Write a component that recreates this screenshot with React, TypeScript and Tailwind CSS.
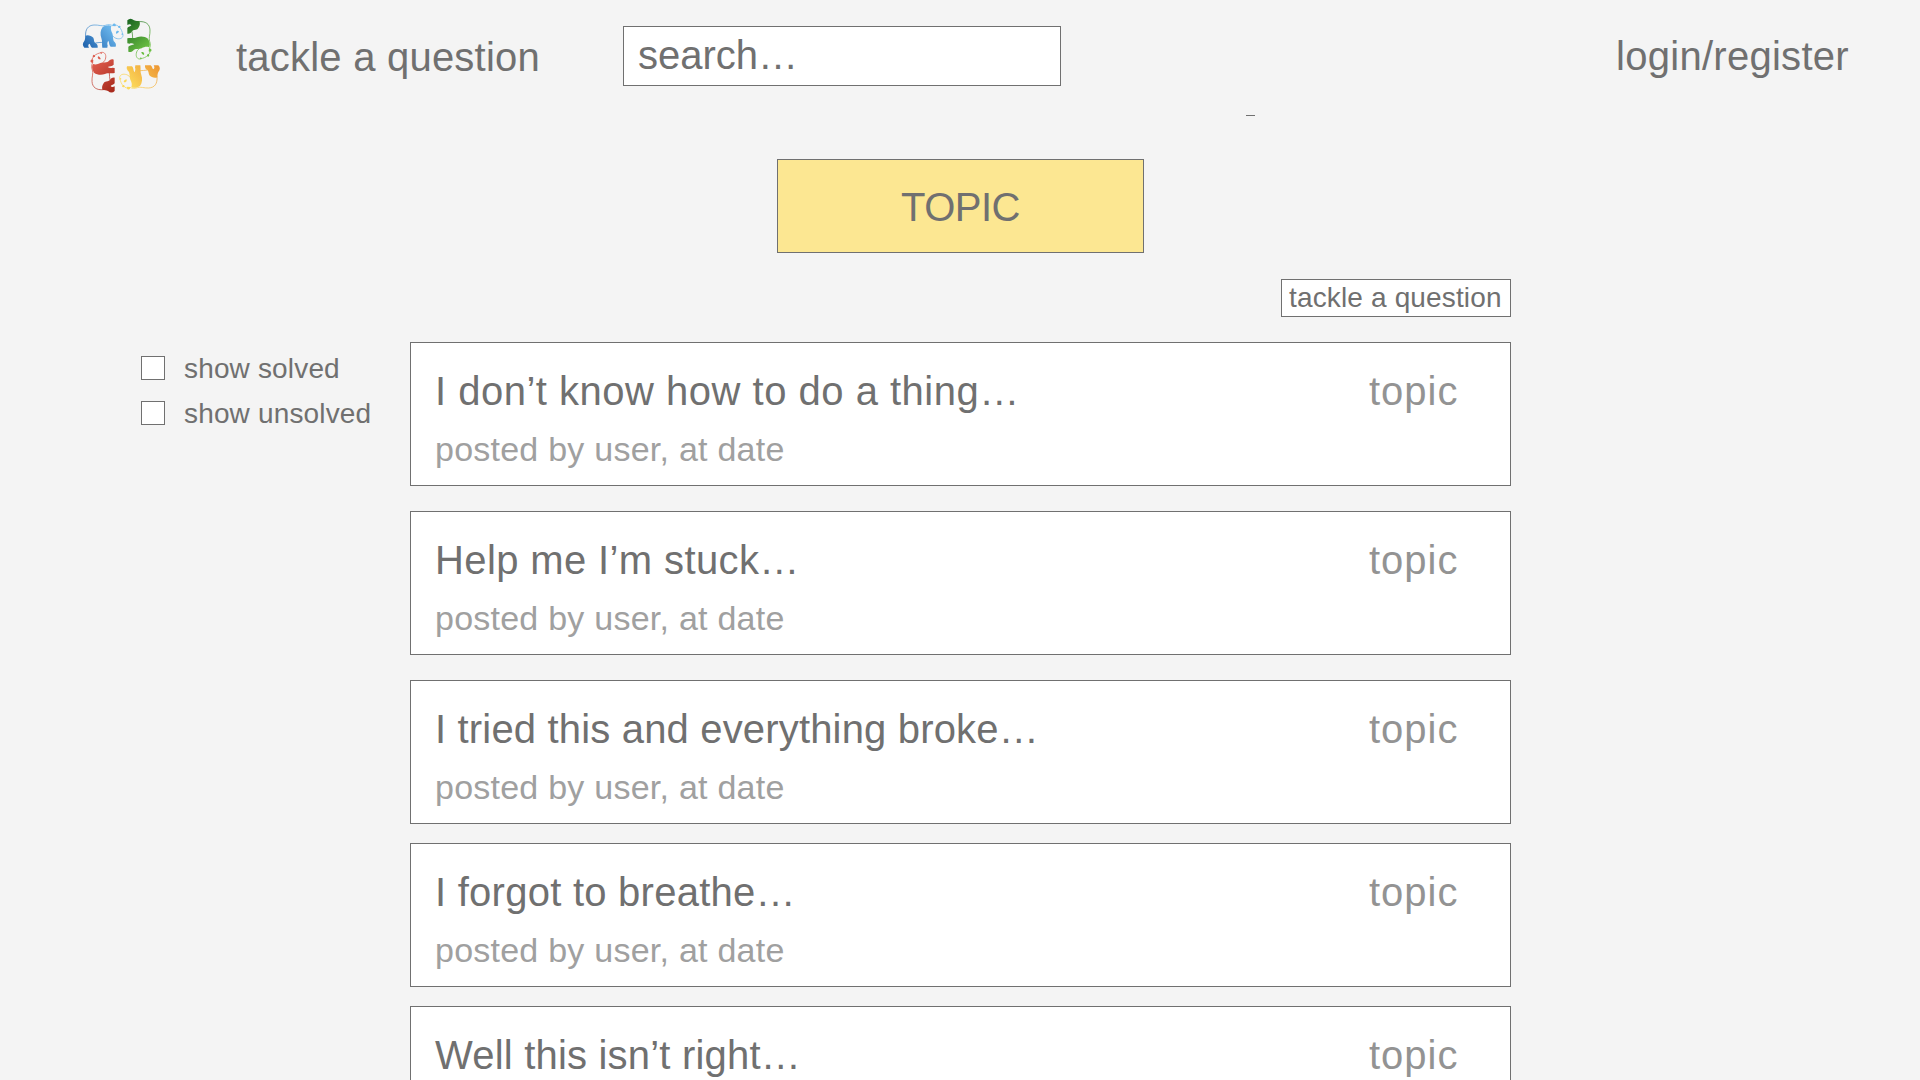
import React from "react";

const questions = [
  { title: "I don’t know how to do a thing…", card: "mt-0", text: "tracking-[0.5px]" },
  { title: "Help me I’m stuck…", card: "mt-[25px]", text: "tracking-[0.38px]" },
  { title: "I tried this and everything broke…", card: "mt-[25px]", text: "tracking-[0.17px]" },
  { title: "I forgot to breathe…", card: "mt-[19px]", text: "tracking-[0.25px]" },
  { title: "Well this isn’t right…", card: "mt-[19px]", text: "tracking-[0.2px]" },
];

const pandas = [
  { id: "blue", from: "#6db9ee", to: "#2467b0", transform: "matrix(1 0 0 1 0 0)" },
  { id: "green", from: "#6cc043", to: "#1f6b23", transform: "matrix(0 1 -1 0 285 -12)" },
  { id: "red", from: "#dd5a4c", to: "#a82a1c", transform: "matrix(0 -1 1 0 21 286)" },
  { id: "yellow", from: "#fbd95a", to: "#ee9a35", transform: "matrix(-1 0 0 -1 308 279)" },
];

function Logo() {
  return (
    <svg className="mt-[10px] ml-[70px] h-[90px] w-[100px] shrink-0" viewBox="0 0 300 270">
      {pandas.map((p) => (
        <g key={p.id} transform={p.transform}>
          <defs>
            <linearGradient id={p.id} gradientUnits="userSpaceOnUse" x1="125" y1="50" x2="50" y2="112">
              <stop offset="0" stopColor={p.from} />
              <stop offset="1" stopColor={p.to} />
            </linearGradient>
          </defs>
          <path
            d="M47 80C45 58 54 46 72 45C86 44 96 50 106 46C114 43 121 43 128 47C136 44 143 45 147 51C155 57 156 66 159 74C160 83 152 88 142 86C136 85 131 82 128 77M76 99C84 97 90 98 98 97"
            fill="none"
            stroke={`url(#${p.id})`}
            strokeWidth="2.2"
          />
          <path
            d="M46 77C54 73 64 77 70 83C73 90 71 94 76 99C81 101 84 106 83 113L66 113C61 109 62 104 58 101C54 103 54 108 57 113L43 113C37 107 37 100 43 93C46 87 45 82 46 77Z"
            fill={`url(#${p.id})`}
          />
          <path
            d="M98 51C107 46 117 43 124 48C121 55 123 63 127 70C130 78 128 86 131 93C136 98 140 103 137 110L122 110C117 105 118 98 115 92C112 96 111 102 113 106L112 113L97 113C95 103 98 94 94 84C90 74 91 60 98 51Z"
            fill={`url(#${p.id})`}
          />
          <path
            d="M128 48C126 43 130 39 135 41C138 43 138 46 136 49ZM144 50C145 46 150 46 152 50C151 54 148 55 146 54ZM138 66C140 62 145 61 147 64C146 68 142 71 138 71ZM153 72L159 70L158 76Z"
            fill={`url(#${p.id})`}
          />
        </g>
      ))}
    </svg>
  );
}

function Filter({ label }: { label: string }) {
  return (
    <label className="flex h-[45px] items-start">
      <span className="h-6 w-6 shrink-0 border border-[#707070] bg-white" />
      <span className="-mt-[3px] ml-[19px] text-[28px] leading-8 tracking-[0.16px] whitespace-nowrap">{label}</span>
    </label>
  );
}

export default function App() {
  return (
    <div className="h-[1080px] w-[1920px] overflow-hidden bg-[#f4f4f4] font-['Liberation_Sans',Arial,sans-serif] text-[40px] leading-[48px] text-[#707070]">
      <header className="flex h-[115px] items-start whitespace-nowrap">
        <Logo />
        <a className="mt-[33px] ml-[66px] w-[387px] shrink-0 tracking-[0.22px]">tackle a question</a>
        <div className="mt-[26px] h-[60px] w-[438px] shrink-0 border border-[#707070] bg-white pt-1 pl-[14px]">search…</div>
        <a className="mt-8 ml-[555px] shrink-0 tracking-[0.28px]">login/register</a>
      </header>
      <div className="ml-[1246px] h-px w-[9px] bg-[#707070]" />

      <h1 className="mt-[43px] ml-[777px] flex h-[94px] w-[367px] justify-center border border-[#707070] bg-[#fce792] pt-[23px] tracking-[-0.5px]">
        TOPIC
      </h1>
      <div className="mt-[26px] ml-[1281px] h-[38px] w-[230px] border border-[#707070] bg-white pt-0.5 pl-[7px] text-[28px] leading-8 tracking-[0.15px] whitespace-nowrap">
        tackle a question
      </div>

      <div className="mt-[25px] flex items-start">
        <aside className="mt-[14px] ml-[141px] w-[269px] shrink-0">
          <Filter label="show solved" />
          <Filter label="show unsolved" />
        </aside>
        <main className="w-[1101px] shrink-0">
          {questions.map((q) => (
            <article key={q.title} className={`h-[144px] border border-[#707070] bg-white pt-6 pl-6 whitespace-nowrap ${q.card}`}>
              <div className="flex">
                <h2 className={`w-[934px] ${q.text}`}>{q.title}</h2>
                <span className="tracking-[1px] text-[#939393]">topic</span>
              </div>
              <p className="mt-[14px] text-[34px] leading-10 tracking-[0.24px] text-[#a0a0a0]">posted by user, at date</p>
            </article>
          ))}
        </main>
      </div>
    </div>
  );
}
